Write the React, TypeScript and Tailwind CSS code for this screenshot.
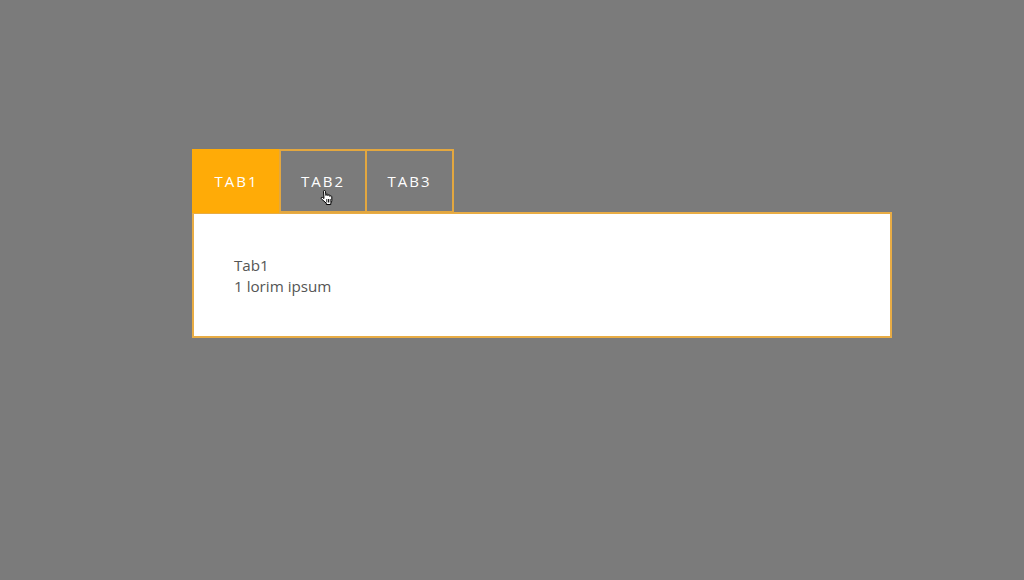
import React from "react";

const tabClass =
  "flex items-center justify-center h-[64px] border-2 border-[#e3a73f] -ml-[2px] first:ml-0 text-[15px] font-medium tracking-[2px] text-white";

const HandCursor = () => (
  <svg
    viewBox="0 0 16 16"
    className="absolute left-[320px] top-[190px] w-[16px] h-[16px]"
  >
    <path
      d="M3.500 1.300c0-1.100 1.900-1.100 1.900 0l.6 4.200.2-.9c.2-.9 1.700-.7 1.700.2v.9l.2-.5c.3-.8 1.700-.5 1.700.3v.9l.3-.3c.5-.6 1.700-.2 1.700.7v3.700c0 1.100-.4 1.800-1 2.600v1.400H6.300v-1.300L1.200 8.700c-.6-.9.500-1.900 1.400-1.200l1.400 1z"
      fill="#fff"
      stroke="#000"
      strokeWidth="1"
      strokeLinejoin="round"
    />
    <path d="M6.800 9v3.500M8.500 9v3.500M10.200 9v3.500" stroke="#000" strokeWidth="0.9" fill="none" />
  </svg>
);

const App = () => {
  return (
    <div className="relative w-[1024px] h-[580px] bg-[#7b7b7b] pt-[149px] pl-[192px] font-['Open_Sans',sans-serif] overflow-hidden">
      <div className="flex w-[262px]">
        <div className={`${tabClass} w-[89px] bg-[#ffab07] border-[#ffab07]`}>TAB1</div>
        <div className={`${tabClass} w-[88px]`}>TAB2</div>
        <div className={`${tabClass} w-[89px]`}>TAB3</div>
      </div>
      <div className="w-[700px] h-[126px] -mt-[1px] bg-white border-2 border-[#e8ac45] pl-[40px] pt-[41px] text-[15.2px] leading-[21px] text-[#555555]">
        <p>Tab1</p>
        <p>1 lorim ipsum</p>
      </div>
      <HandCursor />
    </div>
  );
};

export default App;
